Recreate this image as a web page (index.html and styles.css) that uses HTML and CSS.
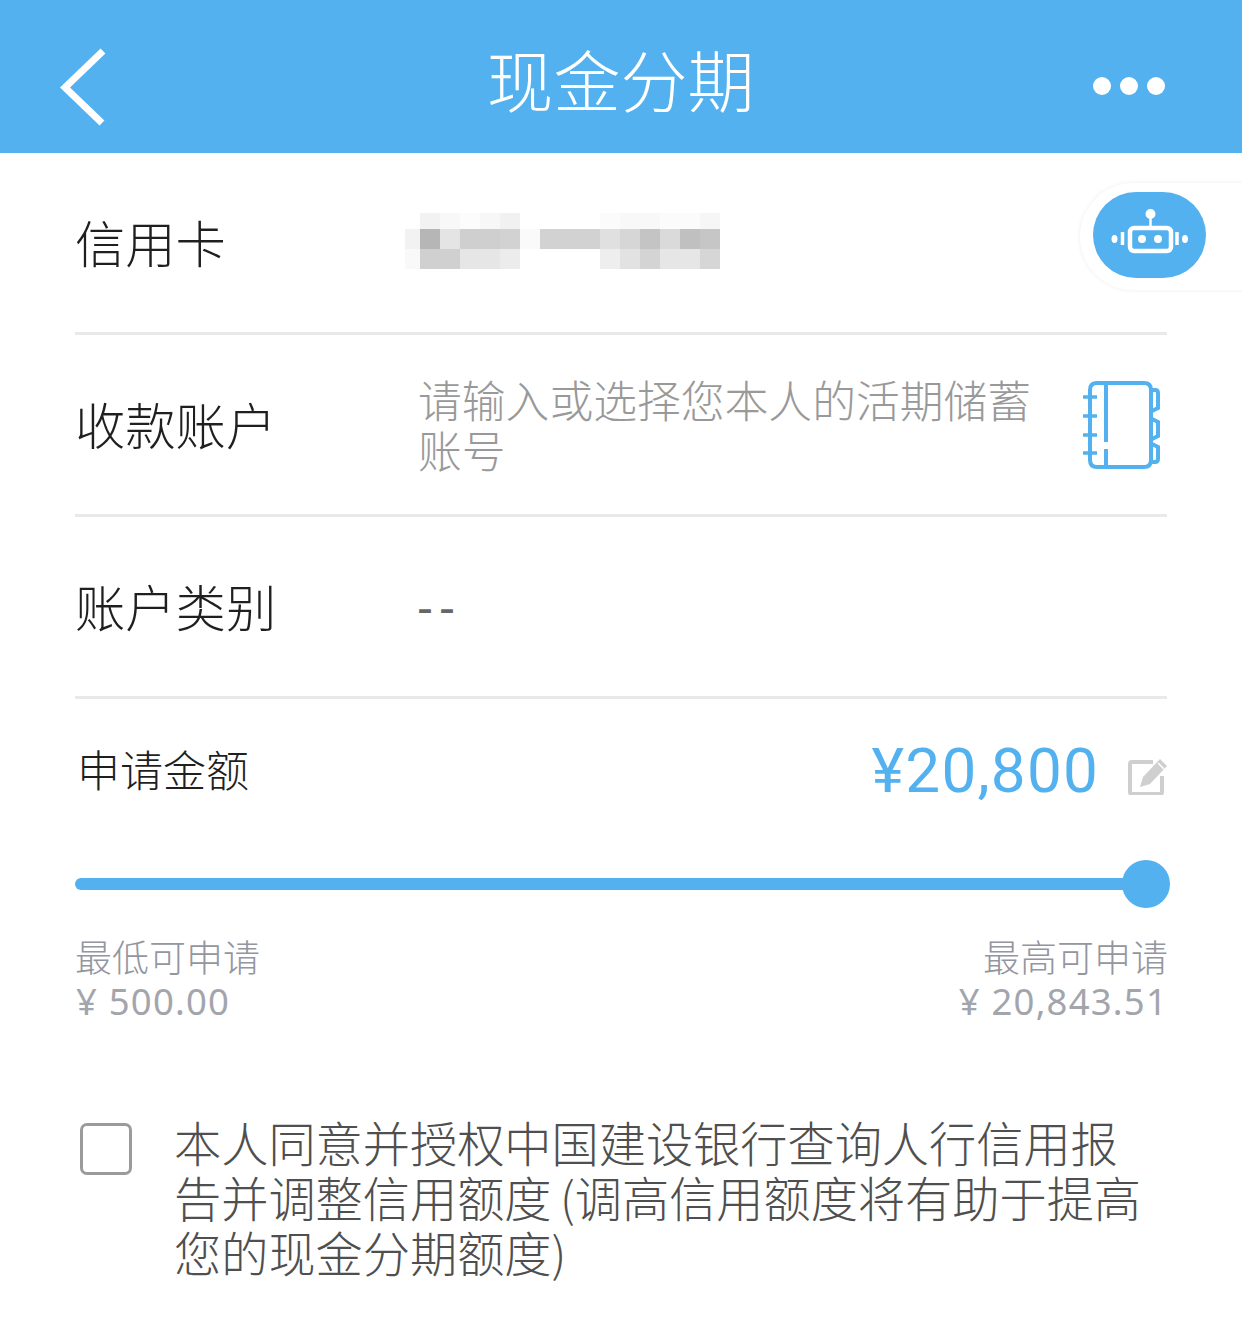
FILE: index.html
```html
<!DOCTYPE html>
<html lang="zh-CN">
<head>
<meta charset="utf-8">
<title>现金分期</title>
<link rel="stylesheet" href="styles.css">
</head>
<body>
<header class="nav">
  <svg class="nav-back" width="46" height="78" viewBox="0 0 46 78"><path d="M43 3 L5 39.500 L42 75" fill="none" stroke="#fff" stroke-width="7"/></svg>
  <h1 class="nav-title">现金分期</h1>
  <div class="nav-more"><i></i><i></i><i></i></div>
</header>
<main class="content">
  <section class="row">
    <div class="label label-shift">信用卡</div>
    <svg class="masked" width="320" height="60" viewBox="0 0 320 60" shape-rendering="crispEdges">
      <rect x="20" y="4" width="20" height="16" fill="#f2f2f2"/><rect x="40" y="4" width="20" height="16" fill="#f8f8f8"/><rect x="60" y="4" width="20" height="16" fill="#fcfcfc"/><rect x="80" y="4" width="20" height="16" fill="#f7f7f7"/><rect x="100" y="4" width="20" height="16" fill="#f1f1f1"/>
      <rect x="200" y="4" width="20" height="16" fill="#fbfbfb"/><rect x="220" y="4" width="40" height="16" fill="#f8f8f8"/><rect x="260" y="4" width="40" height="16" fill="#fbfbfb"/><rect x="300" y="4" width="20" height="16" fill="#f6f6f6"/>
      <rect x="5" y="20" width="15" height="20" fill="#f2f2f2"/><rect x="20" y="20" width="20" height="20" fill="#b6b6b6"/><rect x="40" y="20" width="20" height="20" fill="#e4e4e4"/><rect x="60" y="20" width="40" height="20" fill="#cfcfcf"/><rect x="100" y="20" width="20" height="20" fill="#d2d2d2"/><rect x="120" y="20" width="20" height="20" fill="#fafafa"/>
      <rect x="140" y="20" width="60" height="20" fill="#d2d2d2"/><rect x="200" y="20" width="20" height="20" fill="#e0e0e0"/><rect x="220" y="20" width="20" height="20" fill="#d6d6d6"/><rect x="240" y="20" width="20" height="20" fill="#c4c4c4"/><rect x="260" y="20" width="20" height="20" fill="#dadada"/><rect x="280" y="20" width="20" height="20" fill="#c0c0c0"/><rect x="300" y="20" width="20" height="20" fill="#c6c6c6"/>
      <rect x="5" y="40" width="15" height="20" fill="#f9f9f9"/><rect x="20" y="40" width="40" height="20" fill="#d0d0d0"/><rect x="60" y="40" width="40" height="20" fill="#e6e6e6"/><rect x="100" y="40" width="20" height="20" fill="#ececec"/>
      <rect x="200" y="40" width="20" height="20" fill="#eeeeee"/><rect x="220" y="40" width="20" height="20" fill="#e2e2e2"/><rect x="240" y="40" width="20" height="20" fill="#d4d4d4"/><rect x="260" y="40" width="40" height="20" fill="#e6e6e6"/><rect x="300" y="40" width="20" height="20" fill="#d6d6d6"/>
    </svg>
  </section>
  <section class="row">
    <div class="label label-shift">收款账户</div>
    <div class="placeholder">请输入或选择您本人的活期储蓄账号</div>
    <svg class="book" width="78" height="90" viewBox="0 0 78 90" fill="none" stroke="#52b1ee" stroke-width="4">
      <path d="M8 10 Q8 3 15 3 H62 Q69 3 69 10 V80 Q69 87 62 87 H15 Q8 87 8 80 Z"/>
      <path d="M1 17 H15 M1 36 H15 M1 55 H15 M1 73 H15" stroke-width="3.500"/>
      <path d="M24 4 V62 M24 69 V86" stroke-width="4"/>
      <path d="M69 10 H73 Q76 10 76 13 V28 L70 31 M70 39 L76 42 V56 L70 59 M70 64 L76 67 V79 Q76 82 73 82 H70" stroke-width="4"/>
    </svg>
  </section>
  <section class="row">
    <div class="label label-shift">账户类别</div>
    <div class="type-value">--</div>
  </section>
  <section class="amount">
    <div class="amount-head">
      <div class="amount-label">申请金额</div>
      <div class="amount-value">¥20,800</div>
      <svg class="edit" width="40" height="40" viewBox="0 0 40 40">
        <path d="M25 7 H4 Q2 7 2 9 V37 Q2 39 4 39 H32 Q34 39 34 37 V21" fill="none" stroke="#cfcfcf" stroke-width="4"/>
        <path d="M12 32 L15 22 L32 4 L39 11 L22 29 Z" fill="#cfcfcf"/>
        <path d="M30 8 L36 14" stroke="#fff" stroke-width="1.500"/>
      </svg>
    </div>
    <div class="slider"><div class="slider-fill"></div><div class="slider-thumb"></div></div>
    <div class="limits">
      <div class="limit"><div class="limit-label">最低可申请</div><div class="limit-value">¥ 500.00</div></div>
      <div class="limit limit-right"><div class="limit-label">最高可申请</div><div class="limit-value">¥ 20,843.51</div></div>
    </div>
  </section>
  <section class="agree">
    <div class="check"></div>
    <p class="agree-text">本人同意并授权中国建设银行查询人行信用报告并调整信用额度 (调高信用额度将有助于提高您的现金分期额度)</p>
  </section>
</main>
<aside class="bot">
  <div class="bot-pill">
    <svg width="78" height="60" viewBox="0 0 78 60" fill="none" stroke="#fff">
      <circle cx="39.500" cy="8" r="5" fill="#fff" stroke="none"/>
      <path d="M39.500 10 V20" stroke-width="2.500"/>
      <rect x="19" y="22" width="41" height="23" rx="4" stroke-width="4.500"/>
      <circle cx="31" cy="33" r="4" fill="#fff" stroke="none"/>
      <circle cx="47" cy="33" r="4" fill="#fff" stroke="none"/>
      <path d="M11.500 26 V39 M66 26 V39" stroke-width="3.500"/>
      <ellipse cx="3.500" cy="33" rx="3" ry="4" fill="#fff" stroke="none"/>
      <ellipse cx="74" cy="33" rx="3" ry="4" fill="#fff" stroke="none"/>
    </svg>
  </div>
</aside>
</body>
</html>
```
FILE: styles.css
```css
* { box-sizing: border-box; }
html, body { margin: 0; padding: 0; }
body {
  width: 1242px;
  height: 1323px;
  position: relative;
  overflow: hidden;
  background: #fff;
  font-family: "Noto Sans CJK SC", "Noto Sans", sans-serif;
  font-weight: 300;
  color: #333;
}
.nav {
  height: 153px;
  background: #52b1ee;
  display: flex;
  align-items: center;
  justify-content: space-between;
  padding: 9px 77px 0 60px;
  position: relative;
}
.nav-back { display: block; margin-top: 12px; }
.nav-title {
  position: absolute;
  left: -1px;
  right: 0;
  top: 30px;
  margin: 0;
  text-align: center;
  font-size: 67px;
  line-height: 95px;
  font-weight: 300;
  color: #fff;
}
.nav-more { display: flex; gap: 9px; margin-top: 9px; }
.nav-more i { display: block; width: 18px; height: 18px; border-radius: 50%; background: #fff; }
.content { padding: 0 75px; }
.row {
  height: 182px;
  border-bottom: 3px solid #e9e9e9;
  display: flex;
  align-items: center;
}
.label {
  width: 344px;
  flex: none;
  font-size: 50.300px;
  line-height: 60px;
  color: #1f1f1f;
}
.label-shift { margin-top: -3px; }
.masked { display: block; margin-left: -19px; margin-top: -7px; }
.placeholder {
  width: 640px;
  flex: none;
  margin-left: -1px;
  margin-top: -2px;
  font-size: 43.800px;
  line-height: 50px;
  color: #999;
}
.book { display: block; margin-left: 24px; flex: none; }
.type-value {
  font-size: 48px;
  line-height: 60px;
  color: #666;
  font-family: "Liberation Sans", sans-serif;
  letter-spacing: 6px;
  margin-left: -2px;
  margin-top: 2px;
}
.amount-head {
  display: flex;
  align-items: center;
  height: 144px;
  padding-bottom: 5px;
}
.amount-label {
  flex: 1;
  padding-left: 2px;
  margin-top: -1px;
  font-size: 43px;
  line-height: 60px;
  font-weight: 300;
  color: #1f1f1f;
}
.amount-value {
  font-family: Roboto, "Noto Sans", sans-serif;
  font-size: 62px;
  line-height: 70px;
  font-weight: 400;
  letter-spacing: 1.200px;
  color: #52b1ee;
  margin-right: 29px;
  margin-top: 5px;
}
.edit { display: block; margin-top: 12px; margin-right: -1px; }
.slider {
  height: 12px;
  margin-top: 35px;
  border-radius: 6px;
  position: relative;
}
.slider-fill { height: 100%; background: #52b1ee; border-radius: 6px; margin-right: 3px; }
.slider-thumb {
  position: absolute;
  right: -3px;
  top: -18px;
  width: 48px;
  height: 48px;
  border-radius: 50%;
  background: #52b1ee;
}
.limits {
  display: flex;
  justify-content: space-between;
  margin-top: 44px;
  color: #a3a5ad;
}
.limit-right { text-align: right; margin-right: -1px; }
.limit-label { font-size: 37px; line-height: 44px; font-weight: 300; color: #94969f; }
.limit-value { font-size: 36.500px; line-height: 44px; font-family: "Noto Sans", sans-serif; font-weight: 400; letter-spacing: 1.200px; margin-top: 1px; margin-left: 1px; }
.agree {
  display: flex;
  margin-top: 95px;
  padding-left: 5px;
  align-items: flex-start;
}
.check {
  width: 52px;
  height: 52px;
  flex: none;
  border: 3px solid #9b9b9b;
  border-radius: 7px;
  margin-top: 5px;
}
.agree-text {
  margin: -4px 0 0 42px;
  width: 972px;
  font-size: 47.200px;
  line-height: 55px;
  word-spacing: -2px;
  color: #4f4f4f;
}
.bot {
  position: absolute;
  left: 1080px;
  top: 183px;
  width: 220px;
  height: 107px;
  background: #fff;
  border-radius: 54px;
  box-shadow: 0 0 5px rgba(0,0,0,.07);
  padding: 9px 0 0 13px;
}
.bot-pill {
  width: 113px;
  height: 86px;
  border-radius: 43px;
  background: #52b1ee;
  display: flex;
  align-items: center;
  justify-content: center;
  padding-top: 2px;
}
.bot-pill svg { display: block; width: 78px; height: 60px; flex: none; }
```
